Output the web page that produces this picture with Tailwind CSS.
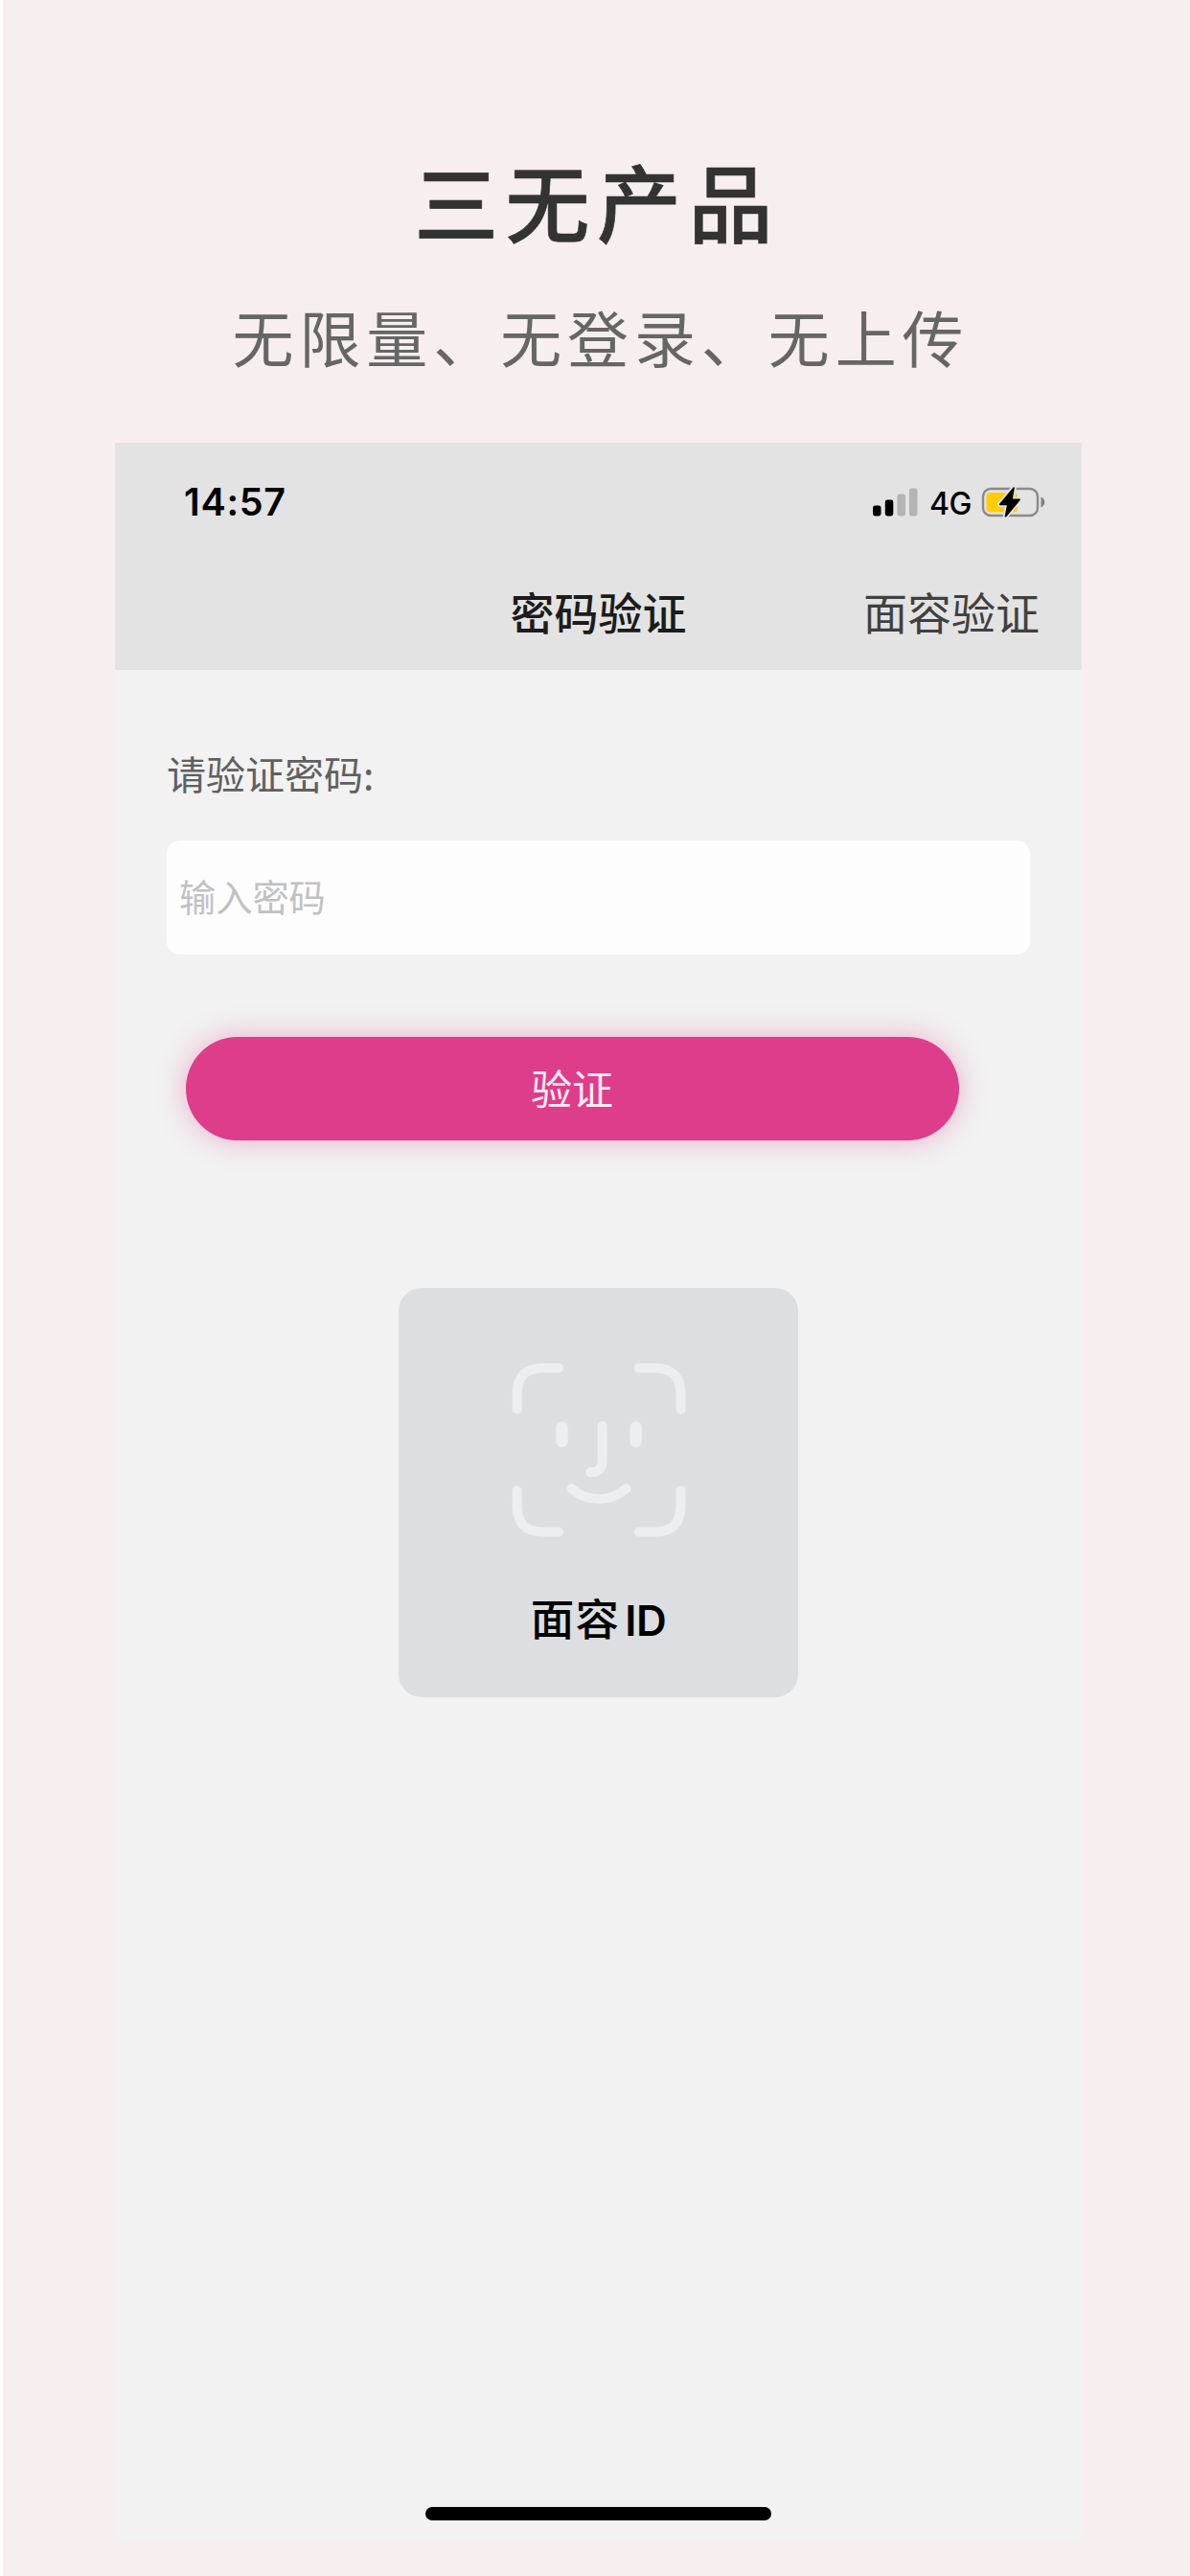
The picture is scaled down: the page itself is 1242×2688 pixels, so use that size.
<!DOCTYPE html>
<html lang="zh-CN">
<head>
    <meta charset="UTF-8">
    <title>密码验证</title>
    <script src="https://cdn.jsdelivr.net/npm/@tailwindcss/browser@4"></script>
</head>

<body class="bg-white font-['Noto_Sans_CJK_SC',sans-serif]">

<div class="flex flex-col ml-[3px] h-[2688px] bg-[#f7eeef] pl-[117px] pr-[113px] overflow-hidden">
    <!-- heading -->
    <div class="h-[462px] pt-[153px] text-center whitespace-nowrap">
        <h1 class="mr-[3px] text-[88px] leading-[110px] tracking-[7.4px] font-medium text-[#333333] [-webkit-text-stroke:0.7px_#333333]">三无产品</h1>
        <p class="mt-[39px] ml-[5px] text-[64px] leading-[96px] tracking-[5.9px] text-[#666666]">无限量、无登录、无上传</p>
    </div>

    <!-- phone screen -->
    <div class="flex flex-col w-[1009px] h-[2189px] bg-[#f2f2f2]">
        <div class="h-[237px] bg-[#e3e3e3]">
            <div class="flex items-center justify-between h-[124px] pl-[72px] pr-[37px]">
                <span class="font-[Inter] text-[39.5px] leading-[40px] font-semibold tracking-[0.7px] text-black">14:57</span>
                <div class="flex items-center">
                    <svg class="w-[48px] h-[30px]" viewBox="0 0 48 30">
                        <rect x="1" y="18.5" width="8.5" height="11" rx="2.4" fill="#000"/>
                        <rect x="13.8" y="12.5" width="8.5" height="17" rx="2.4" fill="#000"/>
                        <rect x="26.5" y="6.5" width="8.5" height="23" rx="2.4" fill="#b4b4b4"/>
                        <rect x="39" y="0.5" width="8.5" height="29" rx="2.4" fill="#b4b4b4"/>
                    </svg>
                    <span class="ml-[12px] w-[44px] pt-[3px] font-[Inter] text-[32px] leading-[36px] font-medium tracking-[-0.5px] text-black">4G</span>
                    <svg class="ml-[10px] w-[68px] h-[34px]" viewBox="0 0 68 34">
                        <rect x="2" y="3" width="57" height="28" rx="8" fill="none" stroke="#8a8a8a" stroke-width="2.4"/>
                        <path d="M62.5 11.5c5 2 5 9 0 11z" fill="#808080"/>
                        <rect x="5.5" y="7" width="32.5" height="20.5" rx="4" fill="#ffcc0a"/>
                        <path d="M34 2.2 19.8 19.3h8.2L25.6 31.6 40 14.5h-8.2z" fill="#000" stroke="#e3e3e3" stroke-width="5.5" stroke-linejoin="round"/>
                        <path d="M34 2.2 19.8 19.3h8.2L25.6 31.6 40 14.5h-8.2z" fill="#000" stroke="#000" stroke-width="1.8" stroke-linejoin="round"/>
                    </svg>
                </div>
            </div>
            <div class="grid grid-cols-3 items-center h-[101px] pr-[44px] pl-[44px] text-[46px] leading-[64px] whitespace-nowrap">
                <span></span>
                <h2 class="text-center font-medium text-[#1c1c1c]">密码验证</h2>
                <span class="text-right text-[#404040]">面容验证</span>
            </div>
        </div>

        <div class="px-[54px] pt-[79px]">
            <label class="block text-[41px] leading-[56px] text-[#606060]">请验证密码:</label>
            <div class="flex items-center mt-[43px] h-[119px] w-[901px] rounded-[14px] bg-[#fdfdfd] px-[13px] pb-[4px] text-[38.2px] text-[#c1c1c4]">输入密码</div>
            <button class="block mt-[86px] ml-[19.5px] h-[108px] w-[807px] rounded-full bg-[#dd3d8a] pb-[4px] text-[43px] leading-[60px] text-[#fdeaf4] shadow-[0_0_30px_rgba(221,61,138,0.38)]">验证</button>
        </div>

        <div class="flex flex-col items-center mt-[154px] ml-[296px] w-[417px] h-[427px] rounded-[24px] bg-[#dddee2]">
            <svg class="shrink-0 mt-[78px] w-[182px] h-[182px]" viewBox="0 0 182 182" fill="none" stroke="#edeef1" stroke-width="10" stroke-linecap="round">
                <path d="M5.7 48.5V32C6 14 14 6 32 5.5h17"/>
                <path d="M133 5.5h17c18 .5 26 8.5 26.5 26.5v16.5"/>
                <path d="M5.7 133.5V150c.3 18 8.3 26 26.3 26.5h17"/>
                <path d="M133 176.5h17c18-.5 26-8.5 26.5-26.5v-16.5"/>
                <path d="M52.5 67.5v14.5M129.7 67.5v14.5" stroke-width="12.5"/>
                <path d="M94.7 66v36c0 8-4 12.5-12.5 12.2"/>
                <path d="M62.5 131.3c17 14.7 40 14.7 57 0"/>
            </svg>
            <p class="mt-[51px] flex items-baseline text-[45.5px] leading-[64px] font-medium tracking-[1.3px] text-black whitespace-nowrap">面容<span class="ml-[5px] font-[Inter] text-[44px] font-semibold tracking-[-0.5px]">ID</span></p>
        </div>

        <!-- home indicator -->
        <div class="mt-auto mb-[21px] mx-auto h-[14px] w-[361px] rounded-full bg-black"></div>
    </div>
</div>

</body>
</html>
